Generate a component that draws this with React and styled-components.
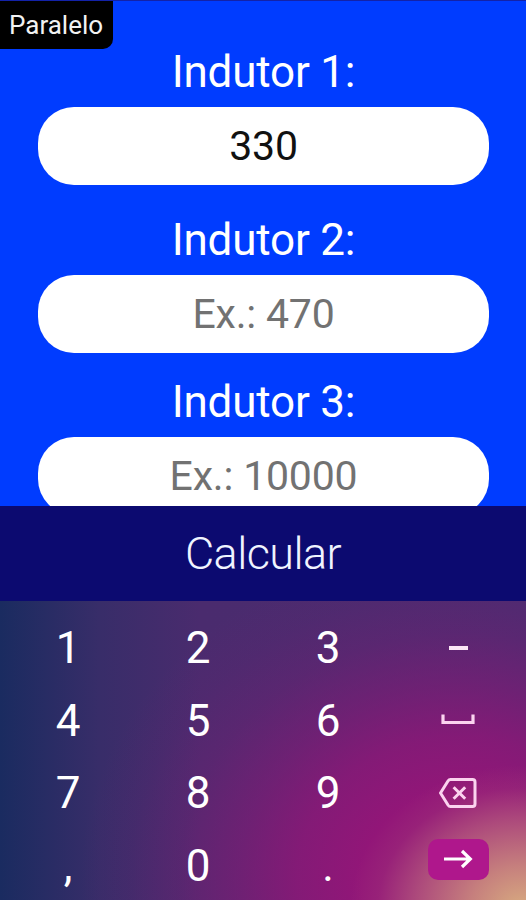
import React from 'react';
import styled, { createGlobalStyle } from 'styled-components';

const fields = [
  { label: 'Indutor 1:', value: '330', gap: 28 },
  { label: 'Indutor 2:', placeholder: 'Ex.: 470', gap: 22 },
  { label: 'Indutor 3:', placeholder: 'Ex.: 10000', gap: 0 },
];

const App = () => {
  return (
    <Screen>
      <GlobalStyle />

      <Form>
        <Mode>Paralelo</Mode>
        {fields.map((field) => (
          <Field key={field.label} $gap={field.gap}>
            <Label>{field.label}</Label>
            <Input
              type='text'
              defaultValue={field.value}
              placeholder={field.placeholder}
            />
          </Field>
        ))}
      </Form>

      <Calculate>Calcular</Calculate>

      <Keyboard>
        <Key>1</Key>
        <Key>2</Key>
        <Key>3</Key>
        <Key>
          <Minus />
        </Key>

        <Key>4</Key>
        <Key>5</Key>
        <Key>6</Key>
        <Key $lift={2}>
          <SpaceIcon />
        </Key>

        <Key>7</Key>
        <Key>8</Key>
        <Key>9</Key>
        <Key $lift={1}>
          <BackspaceIcon />
        </Key>

        <Key>,</Key>
        <Key>0</Key>
        <Key>.</Key>
        <Key $lift={13}>
          <Enter>
            <ArrowIcon />
          </Enter>
        </Key>
      </Keyboard>
    </Screen>
  );
};

const SpaceIcon = () => (
  <svg width='34' height='11' viewBox='0 0 34 11' fill='none'>
    <path d='M2 0.5V8.5H32V0.5' stroke='#fbd3ef' strokeWidth='3.2' />
  </svg>
);

const BackspaceIcon = () => (
  <svg width='38' height='30' viewBox='0 0 38 30' fill='none'>
    <path
      d='M11.5 1.5H33.5Q36 1.5 36 4V26Q36 28.5 33.5 28.5H11.5Q10 28.5 9 27L1.5 15L9 3Q10 1.5 11.5 1.5Z'
      stroke='#fbd3ef'
      strokeWidth='3'
      strokeLinejoin='round'
    />
    <path
      d='M14.6 9.2L26.2 20.8M26.2 9.2L14.6 20.8'
      stroke='#fbd3ef'
      strokeWidth='3'
    />
  </svg>
);

const ArrowIcon = () => (
  <svg width='30' height='20' viewBox='0 0 30 20' fill='none'>
    <path
      d='M1 10H27M19 2L27.3 10L19 18'
      stroke='#fff'
      strokeWidth='3.2'
    />
  </svg>
);

const GlobalStyle = createGlobalStyle`
  * {
    box-sizing: border-box;
  }

  body {
    margin: 0;
    font-family: Roboto, sans-serif;
  }
`;

const Screen = styled.div`
  display: flex;
  flex-direction: column;
  width: 526px;
  height: 900px;
  overflow: hidden;
`;

const Form = styled.div`
  position: relative;
  flex: 0 0 506px;
  padding: 44px 37px 0 38px;
  overflow: hidden;
  background-color: #003cff;
  border-top: 1px solid #1322a8;
`;

const Mode = styled.div`
  position: absolute;
  top: -1px;
  left: 0;
  width: 113px;
  height: 49px;
  padding-left: 9px;
  line-height: 50px;
  font-size: 26px;
  color: #f2f2f2;
  background-color: #000;
  border-bottom-right-radius: 10px;
`;

const Field = styled.div`
  display: flex;
  flex-direction: column;
  margin-bottom: ${(props) => props.$gap}px;
`;

const Label = styled.label`
  height: 62px;
  line-height: 54px;
  font-size: 44px;
  letter-spacing: -0.2px;
  text-align: center;
  color: #fff;
`;

const Input = styled.input`
  width: 100%;
  height: 78px;
  padding: 0;
  border: none;
  border-radius: 36px;
  background-color: #fff;
  font-family: inherit;
  font-size: 41px;
  letter-spacing: -0.2px;
  text-align: center;
  color: #111;

  &::placeholder {
    color: #727272;
  }

  &:focus {
    outline: none;
  }
`;

const Calculate = styled.button`
  flex: 0 0 95px;
  padding: 0;
  border: none;
  background-color: #0c0a70;
  font-family: inherit;
  font-size: 45px;
  font-weight: 300;
  letter-spacing: -0.6px;
  color: #f0f4ff;
`;

const Keyboard = styled.div`
  display: grid;
  grid-template-columns: repeat(4, 130px);
  grid-template-rows: repeat(4, 72.5px);
  flex: 0 0 299px;
  padding: 11px 3px 0;
  background: radial-gradient(
      172px 144px at 522px 308px,
      #d8ac80 0%,
      rgba(205, 142, 126, 0.88) 30%,
      rgba(190, 108, 126, 0.6) 62%,
      rgba(165, 60, 122, 0.3) 84%,
      rgba(146, 22, 120, 0) 100%
    ),
    radial-gradient(
      380px 334px at 460px 279px,
      rgb(146, 22, 120) 26%,
      rgba(146, 22, 120, 0.8) 43%,
      rgba(146, 22, 120, 0.5) 58%,
      rgba(146, 22, 120, 0.22) 74%,
      rgba(146, 22, 120, 0.08) 87%,
      rgba(146, 22, 120, 0) 100%
    ),
    linear-gradient(
      90deg,
      #1a2b60 0px,
      #382d69 100px,
      #4a2b6e 200px,
      #4a2c70 526px
    );
`;

const Key = styled.div`
  display: flex;
  justify-content: center;
  align-items: center;
  padding-bottom: ${(props) => props.$lift || 0}px;
  font-size: 44px;
  color: #fff;
`;

const Minus = styled.span`
  width: 19px;
  height: 4px;
  background-color: #fbe6f6;
`;

const Enter = styled.div`
  display: flex;
  justify-content: center;
  align-items: center;
  width: 61px;
  height: 41px;
  border-radius: 10px;
  background-color: #af178c;
`;

export default App;
